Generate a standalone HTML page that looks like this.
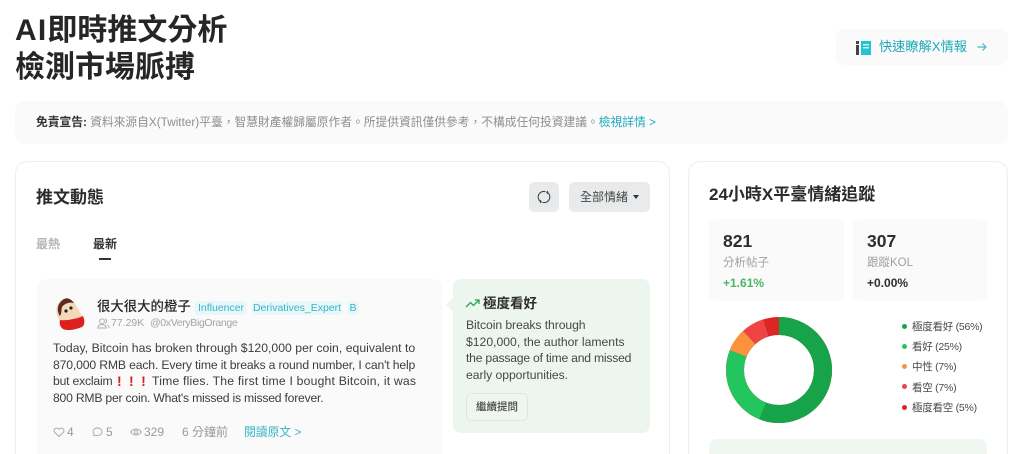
<!DOCTYPE html>
<html lang="zh-Hant"><head><meta charset="utf-8"><title>AI即時推文分析</title>
<style>
html,body{margin:0;padding:0;background:#fff;width:1024px;height:454px;overflow:hidden}
#w{position:relative;width:1024px;height:454px;overflow:hidden;font-family:"Liberation Sans","Noto Sans CJK TC",sans-serif;color:#262626}
.a{position:absolute;white-space:nowrap}
.tag{position:absolute;top:301px;height:14px;line-height:14px;background:#e8f8fa;color:#35b6c4;font-size:10.5px;border-radius:3px;text-align:center}
.tw{font-size:12.2px;color:#3d3d3d;left:53px;line-height:18px}
.sm{font-size:12.2px;color:#474747;left:466px;line-height:17px}
.leg{left:912px;font-size:10.5px;color:#4a4a4a;line-height:14px;letter-spacing:-.25px}
.dot{position:absolute;left:902px;width:5px;height:5px;border-radius:50%}
.st{color:#9a9a9a;font-size:12px;line-height:16px;top:424px}
</style></head><body><div id="w">
<div class="a" style="left:15px;top:12px;font-size:30px;line-height:37px;font-weight:700;color:#262626"><span style="letter-spacing:1.2px">AI</span>即時推文分析<br>檢測市場脈搏</div>

<div class="a" style="left:836px;top:29px;width:172px;height:36px;background:#fafafa;border-radius:8px"></div>
<svg class="a" style="left:855px;top:41px" width="18" height="14" viewBox="0 0 18 14"><rect x="1" y="0" width="3" height="3" fill="#444"/><rect x="1" y="4" width="3" height="10" fill="#444"/><rect x="6" y="0" width="10" height="14" fill="#22c3d3"/><rect x="8" y="3" width="6" height="1.5" fill="#c9f1f5"/><rect x="8" y="6" width="6" height="1.5" fill="#c9f1f5"/></svg>
<div class="a" style="left:879px;top:38px;font-size:13.2px;line-height:18px;color:#1fa9ba">快速瞭解X情報</div>
<svg class="a" style="left:976px;top:41px" width="12" height="12" viewBox="0 0 12 12" fill="none" stroke="#4fb5c2" stroke-width="1.2"><path d="M1.5 6H10M6.5 2.5L10 6 6.5 9.5"/></svg>

<div class="a" style="left:15px;top:101px;width:993px;height:43px;background:#fafafa;border-radius:10px"></div>
<div class="a" style="left:36px;top:114px;font-size:11.75px;line-height:17px;color:#8f8f8f"><b style="color:#333">免責宣告:</b> 資料來源自X(Twitter)平臺，智慧財產權歸屬原作者。所提供資訊僅供參考，不構成任何投資建議。<span style="color:#1fa9ba">檢視詳情 &gt;</span></div>

<div class="a" style="left:15px;top:161px;width:655px;height:293px;box-sizing:border-box;border:1px solid #efefef;border-bottom:0;border-radius:12px 12px 0 0"></div>
<div class="a" style="left:36px;top:186px;font-size:17px;line-height:24px;font-weight:700;color:#2b2b2b">推文動態</div>
<div class="a" style="left:529px;top:182px;width:30px;height:30px;background:#e8eaeb;border-radius:5px"></div>
<svg class="a" style="left:536px;top:189px" width="16" height="16" viewBox="0 0 16 16" fill="none" stroke="#444" stroke-width="1.1"><path d="M9.5 2.7A5.6 5.6 0 0 0 5 12.9M6.5 13.3A5.6 5.6 0 0 0 11 3.1"/><path d="M4 14L5.2 12.8 4.4 11.2M12 2L10.8 3.2 11.6 4.8" stroke-width="1"/></svg>
<div class="a" style="left:569px;top:182px;width:81px;height:30px;background:#e8eaeb;border-radius:5px"></div>
<div class="a" style="left:580px;top:189px;font-size:12px;line-height:17px;color:#444">全部情緒</div>
<div class="a" style="left:633px;top:195px;width:0;height:0;border:3.5px solid transparent;border-top:4px solid #333;border-bottom:0"></div>

<div class="a" style="left:36px;top:236px;font-size:12px;line-height:17px;font-weight:700;color:#b5b5b5">最熱</div>
<div class="a" style="left:93px;top:236px;font-size:12px;line-height:17px;font-weight:700;color:#333">最新</div>
<div class="a" style="left:99px;top:258px;width:12px;height:2px;background:#333"></div>

<div class="a" style="left:37px;top:279px;width:405px;height:175px;background:#fafafa;border-radius:10px 10px 0 0"></div>
<svg class="a" style="left:53px;top:296px" width="34" height="36" viewBox="0 0 34 36"><path d="M11 3C16 0 21 5 24 11L29 20C29 24 25 25 20 26L9 27C5 24 2 16 4 10 5 7 8 4 11 3Z" fill="#f4d9b8"/><path d="M11 3C15 1 19 4 21 7 17 6 12 7 9 11 8 14 9 17 7 20 4 16 3 8 11 3Z" fill="#5a2b20"/><circle cx="13" cy="15" r="1.6" fill="#222"/><circle cx="18" cy="12" r="1.6" fill="#222"/><path d="M7 24C12 25 24 23 30 20 32 25 32 29 29 31 22 34 14 35 10 33 7 31 6 27 7 24Z" fill="#dc2020"/></svg>
<div class="a" style="left:97px;top:297px;font-size:13.4px;line-height:20px;font-weight:500;color:#262626">很大很大的橙子</div>
<div class="tag" style="left:195px;width:52px">Influencer</div>
<div class="tag" style="left:252px;width:90px">Derivatives_Expert</div>
<div class="tag" style="left:347px;width:12px">B</div>
<svg class="a" style="left:97px;top:318px" width="13" height="11" viewBox="0 0 13 11" fill="none" stroke="#aaa" stroke-width=".9"><circle cx="5" cy="3.2" r="2.4"/><path d="M.7 10C1 7.5 3 6.5 5 6.5S9 7.5 9.3 10ZM8 1A2.4 2.4 0 0 1 8 5.5M10 7C11.3 7.6 12 8.7 12.2 10"/></svg>
<div class="a" style="left:111px;top:316px;font-size:10.5px;line-height:15px;color:#a3a3a3">77.29K</div>
<div class="a" style="left:150px;top:316px;font-size:10.5px;line-height:15px;color:#a3a3a3;letter-spacing:-.35px">@0xVeryBigOrange</div>

<div class="a tw" style="top:339px;letter-spacing:.03px">Today, Bitcoin has broken through $120,000 per coin, equivalent to</div>
<div class="a tw" style="top:356px;letter-spacing:-.15px">870,000 RMB each. Every time it breaks a round number, I can't help</div>
<div class="a tw" style="top:372px;letter-spacing:-.2px">but exclaim</div>
<div class="a" style="left:117px;top:372px;font-size:14px;line-height:18px;font-weight:700;color:#d81e1e;letter-spacing:7.4px">!!!</div>
<div class="a tw" style="left:152px;top:372px;letter-spacing:.2px">Time flies. The first time I bought Bitcoin, it was</div>
<div class="a tw" style="top:389px;letter-spacing:-.22px">800 RMB per coin. What's missed is missed forever.</div>

<svg class="a" style="left:53px;top:426px" width="12" height="12" viewBox="0 0 12 12" fill="none" stroke="#a5a5a5" stroke-width=".9"><path d="M6 10.5L1.6 6.2C-.6 3.6 3.6.4 6 3.2 8.4.4 12.6 3.6 10.4 6.2Z"/></svg>
<div class="a st" style="left:67px">4</div>
<svg class="a" style="left:92px;top:427px" width="11" height="10" viewBox="0 0 11 10" fill="none" stroke="#a5a5a5" stroke-width=".9"><path d="M5.5 1C8 1 10 2.6 10 4.7S8 8.4 5.5 8.4H1.8L2.2 7C1.4 6.4 1 5.6 1 4.7 1 2.6 3 1 5.5 1Z"/></svg>
<div class="a st" style="left:106px">5</div>
<svg class="a" style="left:130px;top:427px" width="12" height="10" viewBox="0 0 12 10" fill="none" stroke="#a5a5a5" stroke-width=".9"><path d="M.8 5C3.5 1 8.5 1 11.2 5 8.5 9 3.5 9 .8 5Z"/><circle cx="6" cy="5" r="1.6"/></svg>
<div class="a st" style="left:144px">329</div>
<div class="a st" style="left:182px">6 分鐘前</div>
<div class="a" style="left:244px;top:424px;font-size:11.8px;line-height:16px;color:#35b6c4">閱讀原文 &gt;</div>

<div class="a" style="left:453px;top:279px;width:197px;height:154px;background:#edf6ee;border-radius:8px"></div>
<div class="a" style="left:446px;top:298px;width:0;height:0;border:7px solid transparent;border-right:7px solid #edf6ee;border-left:0"></div>
<svg class="a" style="left:465px;top:298px" width="15" height="11" viewBox="0 0 15 11" fill="none" stroke="#2ba55a" stroke-width="1.3"><path d="M1 9L5.5 4.5 8.5 7.5 13.5 2.5M10 2H14V6"/></svg>
<div class="a" style="left:483px;top:294px;font-size:13.5px;line-height:19px;font-weight:700;color:#2e2e2e">極度看好</div>
<div class="a sm" style="top:317px;letter-spacing:-.08px">Bitcoin breaks through</div>
<div class="a sm" style="top:334px">$120,000, the author laments</div>
<div class="a sm" style="top:350px;letter-spacing:-.23px">the passage of time and missed</div>
<div class="a sm" style="top:367px;letter-spacing:-.05px">early opportunities.</div>
<div class="a" style="left:466px;top:393px;width:62px;height:28px;box-sizing:border-box;border:1px solid #dfe6df;border-radius:5px;background:#eff6f0;text-align:center;font-size:10.5px;line-height:26px;color:#444;font-weight:500">繼續提問</div>

<div class="a" style="left:688px;top:161px;width:320px;height:293px;box-sizing:border-box;border:1px solid #efefef;border-bottom:0;border-radius:12px 12px 0 0"></div>
<div class="a" style="left:709px;top:183px;font-size:17px;line-height:24px;font-weight:700;color:#2b2b2b">24小時X平臺情緒追蹤</div>
<div class="a" style="left:709px;top:219px;width:135px;height:82px;background:#fafafa;border-radius:7px"></div>
<div class="a" style="left:853px;top:219px;width:134px;height:82px;background:#fafafa;border-radius:7px"></div>
<div class="a" style="left:723px;top:231px;font-size:17.5px;line-height:20px;font-weight:700;color:#2e2e2e">821</div>
<div class="a" style="left:723px;top:255px;font-size:11.5px;line-height:17px;color:#a0a0a0">分析帖子</div>
<div class="a" style="left:723px;top:275px;font-size:12px;line-height:17px;font-weight:700;color:#4eb562">+1.61%</div>
<div class="a" style="left:867px;top:231px;font-size:17.5px;line-height:20px;font-weight:700;color:#2e2e2e">307</div>
<div class="a" style="left:867px;top:255px;font-size:11.5px;line-height:17px;color:#a0a0a0">跟蹤KOL</div>
<div class="a" style="left:867px;top:275px;font-size:12px;line-height:17px;font-weight:700;color:#2e2e2e">+0.00%</div>

<svg class="a" style="left:719px;top:310px" width="120" height="120" viewBox="0 0 120 120" fill="none" stroke-width="18"><g transform="rotate(-90 60 60)">
<circle cx="60" cy="60" r="44" stroke="#dc2626"/>
<circle cx="60" cy="60" r="44" stroke="#ef4444" stroke-dasharray="262.6 276.5"/>
<circle cx="60" cy="60" r="44" stroke="#fb923c" stroke-dasharray="243.3 276.5"/>
<circle cx="60" cy="60" r="44" stroke="#22c55e" stroke-dasharray="224 276.5"/>
<circle cx="60" cy="60" r="44" stroke="#16a34a" stroke-dasharray="154.8 276.5"/></g></svg>

<i class="dot" style="top:324px;background:#16a34a"></i><div class="a leg" style="top:320px">極度看好 (56%)</div>
<i class="dot" style="top:344px;background:#22c55e"></i><div class="a leg" style="top:340px">看好 (25%)</div>
<i class="dot" style="top:364px;background:#fb923c"></i><div class="a leg" style="top:360px">中性 (7%)</div>
<i class="dot" style="top:384px;background:#ef4444"></i><div class="a leg" style="top:381px">看空 (7%)</div>
<i class="dot" style="top:405px;background:#dc2626"></i><div class="a leg" style="top:401px">極度看空 (5%)</div>
<div class="a" style="left:709px;top:439px;width:278px;height:15px;background:#eff7f0;border-radius:8px 8px 0 0"></div>
</div></body></html>
